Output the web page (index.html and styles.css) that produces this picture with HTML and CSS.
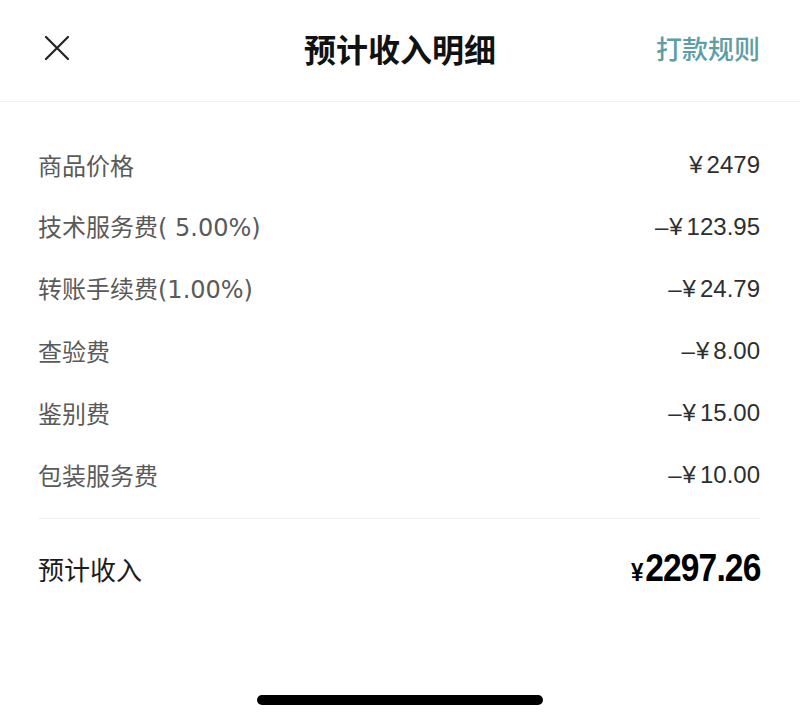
FILE: index.html
```html
<!DOCTYPE html>
<html lang="zh-CN">
<head>
<meta charset="utf-8">
<title>预计收入明细</title>
<link rel="stylesheet" href="styles.css">
</head>
<body>
<div class="page">
  <header class="header">
    <button class="close" aria-label="关闭">
      <svg width="26" height="26" viewBox="0 0 26 26"><path d="M2 2 L24 24 M24 2 L2 24" stroke="#222" stroke-width="2.2" stroke-linecap="round" fill="none"/></svg>
    </button>
    <h1 class="title">预计收入明细</h1>
    <a class="rule">打款规则</a>
  </header>
  <main class="content">
    <div class="rows">
      <div class="row"><span class="label">商品价格</span><span class="amount"><span class="yen">¥</span>2479</span></div>
      <div class="row"><span class="label">技术服务费<span class="rate">( 5.00%)</span></span><span class="amount"><span class="minus">–</span><span class="yen">¥</span>123.95</span></div>
      <div class="row"><span class="label">转账手续费<span class="rate">(1.00%)</span></span><span class="amount"><span class="minus">–</span><span class="yen">¥</span>24.79</span></div>
      <div class="row"><span class="label">查验费</span><span class="amount"><span class="minus">–</span><span class="yen">¥</span>8.00</span></div>
      <div class="row"><span class="label">鉴别费</span><span class="amount"><span class="minus">–</span><span class="yen">¥</span>15.00</span></div>
      <div class="row"><span class="label">包装服务费</span><span class="amount"><span class="minus">–</span><span class="yen">¥</span>10.00</span></div>
    </div>
    <div class="total">
      <span class="total-label">预计收入</span>
      <span class="total-amount"><span class="total-yen">¥</span>2297.26</span>
    </div>
  </main>
  <div class="home-indicator"></div>
</div>
</body>
</html>
```

FILE: styles.css
```css
* { box-sizing: border-box; }
html, body { margin: 0; padding: 0; background: #fff; }
body {
  font-family: "Liberation Sans", "Noto Sans CJK SC", sans-serif;
  color: #333;
}
.page {
  width: 800px;
  height: 719px;
  display: flex;
  flex-direction: column;
  overflow: hidden;
}
.header {
  height: 102px;
  flex: none;
  display: grid;
  grid-template-columns: 1fr auto 1fr;
  align-items: center;
  padding: 0 40px 6px 44px;
  border-bottom: 1px solid #f0f0f0;
}
.close {
  justify-self: start;
  border: 0;
  background: none;
  padding: 0;
  width: 26px;
  height: 26px;
  display: flex;
}
.title {
  margin: 0 4px 0 0;
  font-family: "Noto Sans CJK SC", sans-serif;
  font-size: 32px;
  font-weight: 700;
  color: #111;
  letter-spacing: 0;
}
.rule {
  justify-self: end;
  font-family: "Noto Sans CJK SC", sans-serif;
  font-size: 26px;
  color: #5d9ea5;
  font-weight: 500;
}
.content {
  padding: 32px 40px 0 38px;
}
.rows {
  border-bottom: 1px solid #f0f0f0;
  padding-bottom: 12px;
}
.row {
  height: 62px;
  display: flex;
  justify-content: space-between;
  align-items: center;
}
.label {
  font-family: "Noto Sans CJK SC", sans-serif;
  font-size: 24px;
  color: #5a5a5a;
  line-height: 1.2;
}
.rate {
  font-family: "DejaVu Sans", sans-serif;
  font-size: 24px;
  font-weight: 400;
  color: #5a5a5a;
}
.amount {
  font-size: 24px;
  color: #2e2e2e;
}
.minus { margin-right: 1px; }
.yen { margin-right: 4px; }
.total {
  height: 98px;
  display: flex;
  justify-content: space-between;
  align-items: center;
}
.total-label {
  font-family: "Noto Sans CJK SC", sans-serif;
  font-size: 26px;
  color: #1c1c1c;
}
.total-amount {
  font-family: "Liberation Sans", sans-serif;
  font-weight: 700;
  font-size: 39px;
  color: #000;
  letter-spacing: -1px;
  display: inline-block;
  transform: scaleX(0.86);
  transform-origin: right center;
}
.total-yen {
  font-size: 26px;
  margin-right: 3px;
}
.home-indicator {
  margin: auto auto 14px;
  width: 286px;
  height: 10px;
  border-radius: 5px;
  background: #000;
}
```
